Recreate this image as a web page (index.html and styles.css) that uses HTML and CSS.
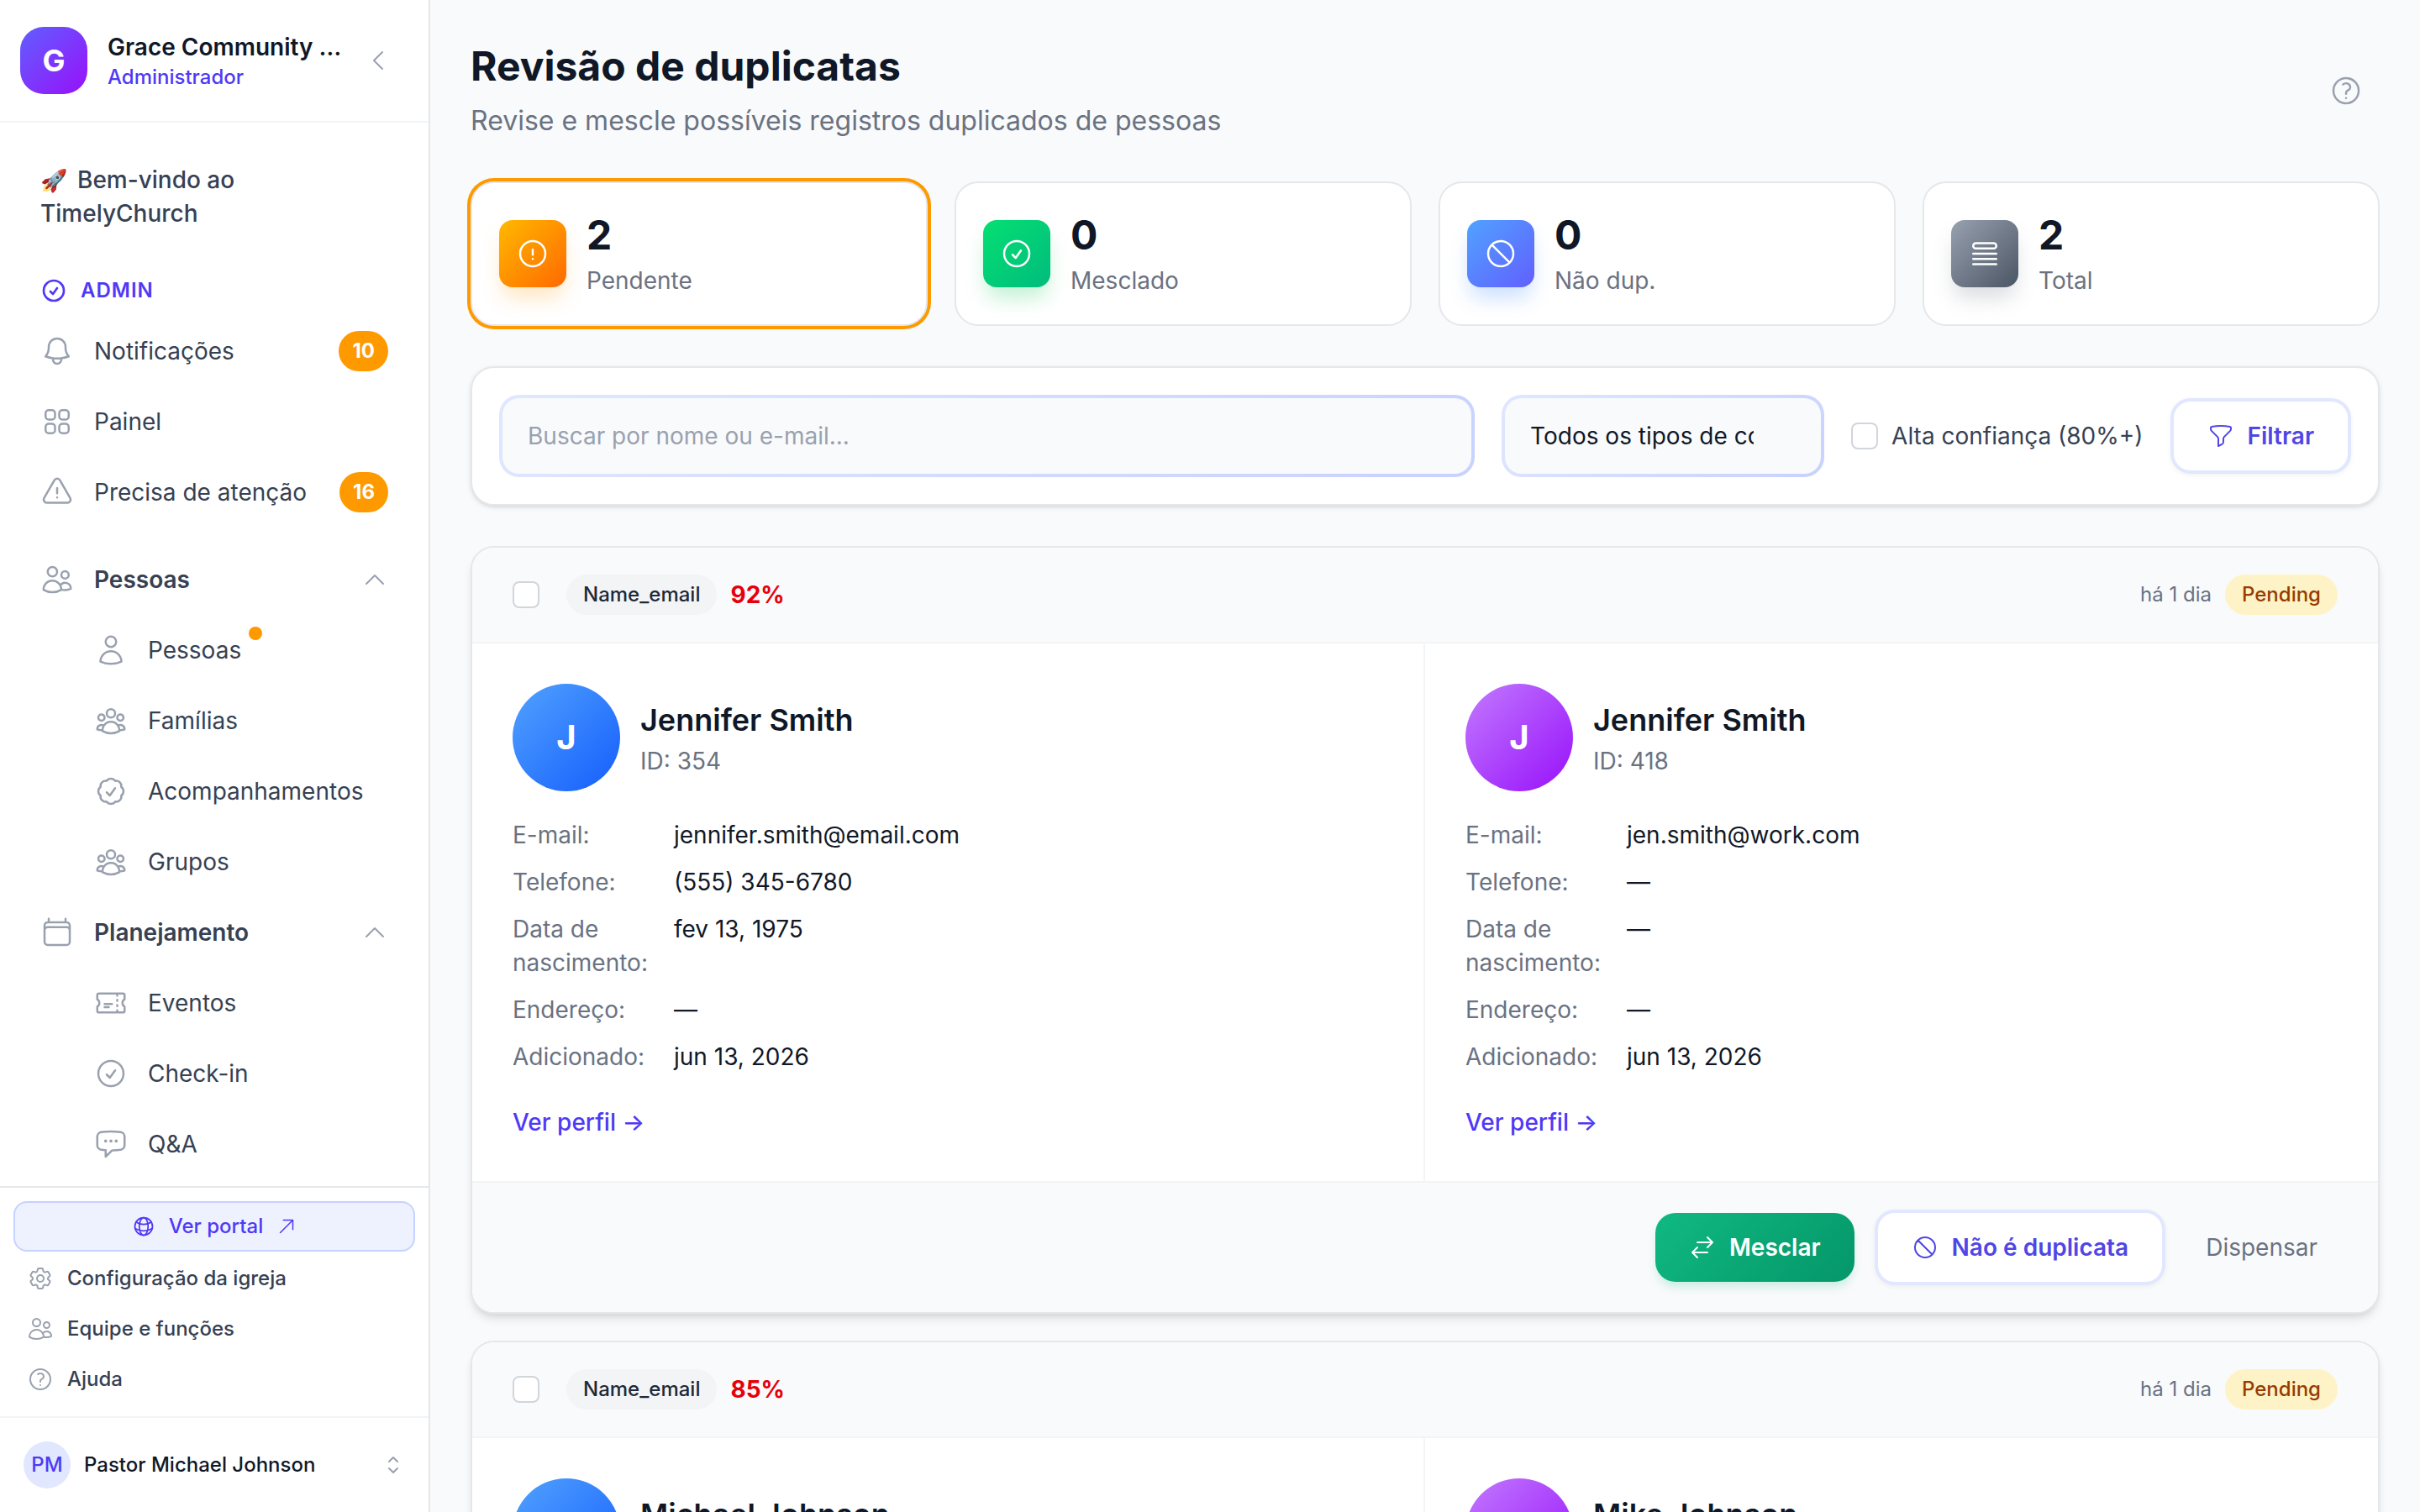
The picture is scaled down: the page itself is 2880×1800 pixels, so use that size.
FILE: index.html
```html
<!DOCTYPE html>
<html lang="pt-BR">
<head>
<meta charset="UTF-8" />
<meta name="viewport" content="width=device-width, initial-scale=1" />
<title>Revisão de duplicatas</title>
<link rel="stylesheet" href="styles.css">
</head>
<body>

<!-- Icon sprite -->
<svg class="sprite" aria-hidden="true">
  <symbol id="i-chevron-left" viewBox="0 0 24 24"><path d="M15.75 19.5 8.25 12l7.5-7.5"/></symbol>
  <symbol id="i-chevron-up" viewBox="0 0 24 24"><path d="m4.5 15.75 7.5-7.5 7.5 7.5"/></symbol>
  <symbol id="i-chevron-up-down" viewBox="0 0 24 24"><path d="M8.25 15 12 18.75 15.75 15m-7.5-6L12 5.25 15.75 9"/></symbol>
  <symbol id="i-check-circle" viewBox="0 0 24 24"><path d="M9 12.75 11.25 15 15 9.75M21 12a9 9 0 1 1-18 0 9 9 0 0 1 18 0Z"/></symbol>
  <symbol id="i-bell" viewBox="0 0 24 24"><path d="M14.857 17.082a23.848 23.848 0 0 0 5.454-1.31A8.967 8.967 0 0 1 18 9.75V9A6 6 0 0 0 6 9v.75a8.967 8.967 0 0 1-2.312 6.022c1.733.64 3.56 1.085 5.455 1.31m5.714 0a24.255 24.255 0 0 1-5.714 0m5.714 0a3 3 0 1 1-5.714 0"/></symbol>
  <symbol id="i-grid" viewBox="0 0 24 24"><path d="M3.75 6A2.25 2.25 0 0 1 6 3.75h2.25A2.25 2.25 0 0 1 10.5 6v2.25a2.25 2.25 0 0 1-2.25 2.25H6a2.25 2.25 0 0 1-2.25-2.25V6ZM3.75 15.75A2.25 2.25 0 0 1 6 13.5h2.25a2.25 2.25 0 0 1 2.25 2.25V18a2.25 2.25 0 0 1-2.25 2.25H6A2.25 2.25 0 0 1 3.75 18v-2.25ZM13.5 6a2.25 2.25 0 0 1 2.25-2.25H18A2.25 2.25 0 0 1 20.25 6v2.25A2.25 2.25 0 0 1 18 10.5h-2.25a2.25 2.25 0 0 1-2.25-2.25V6ZM13.5 15.75a2.25 2.25 0 0 1 2.25-2.25H18a2.25 2.25 0 0 1 2.25 2.25V18A2.25 2.25 0 0 1 18 20.25h-2.25A2.25 2.25 0 0 1 13.5 18v-2.25Z"/></symbol>
  <symbol id="i-warning" viewBox="0 0 24 24"><path d="M12 9v3.75m-9.303 3.376c-.866 1.5.217 3.374 1.948 3.374h14.71c1.73 0 2.813-1.874 1.948-3.374L13.949 3.378c-.866-1.5-3.032-1.5-3.898 0L2.697 16.126ZM12 15.75h.007v.008H12v-.008Z"/></symbol>
  <symbol id="i-users" viewBox="0 0 24 24"><path d="M15 19.128a9.38 9.38 0 0 0 2.625.372 9.337 9.337 0 0 0 4.121-.952 4.125 4.125 0 0 0-7.533-2.493M15 19.128v-.003c0-1.113-.285-2.16-.786-3.07M15 19.128v.106A12.318 12.318 0 0 1 8.624 21c-2.331 0-4.512-.645-6.374-1.766l-.001-.109a6.375 6.375 0 0 1 11.964-3.07M12 6.375a3.375 3.375 0 1 1-6.75 0 3.375 3.375 0 0 1 6.75 0Zm8.25 2.25a2.625 2.625 0 1 1-5.25 0 2.625 2.625 0 0 1 5.25 0Z"/></symbol>
  <symbol id="i-user" viewBox="0 0 24 24"><path d="M15.75 6a3.75 3.75 0 1 1-7.5 0 3.75 3.75 0 0 1 7.5 0ZM4.501 20.118a7.5 7.5 0 0 1 14.998 0A17.933 17.933 0 0 1 12 21.75c-2.676 0-5.216-.584-7.499-1.632Z"/></symbol>
  <symbol id="i-user-group" viewBox="0 0 24 24"><path d="M18 18.72a9.094 9.094 0 0 0 3.741-.479 3 3 0 0 0-4.682-2.72m.94 3.198.001.031c0 .225-.012.447-.037.666A11.944 11.944 0 0 1 12 21c-2.17 0-4.207-.576-5.963-1.584A6.062 6.062 0 0 1 6 18.719m12 0a5.971 5.971 0 0 0-.941-3.197m0 0A5.995 5.995 0 0 0 12 12.75a5.995 5.995 0 0 0-5.058 2.772m0 0a3 3 0 0 0-4.681 2.72 8.986 8.986 0 0 0 3.74.477m.94-3.197a5.971 5.971 0 0 0-.94 3.197M15 6.75a3 3 0 1 1-6 0 3 3 0 0 1 6 0Zm6 3a2.25 2.25 0 1 1-4.5 0 2.25 2.25 0 0 1 4.5 0Zm-13.5 0a2.25 2.25 0 1 1-4.5 0 2.25 2.25 0 0 1 4.5 0Z"/></symbol>
  <symbol id="i-check-badge" viewBox="0 0 24 24"><path d="M9 12.75 11.25 15 15 9.75M21 12c0 1.268-.63 2.39-1.593 3.068a3.745 3.745 0 0 1-1.043 3.296 3.745 3.745 0 0 1-3.296 1.043A3.745 3.745 0 0 1 12 21c-1.268 0-2.39-.63-3.068-1.593a3.746 3.746 0 0 1-3.296-1.043 3.745 3.745 0 0 1-1.043-3.296A3.745 3.745 0 0 1 3 12c0-1.268.63-2.39 1.593-3.068a3.745 3.745 0 0 1 1.043-3.296 3.746 3.746 0 0 1 3.296-1.043A3.746 3.746 0 0 1 12 3c1.268 0 2.39.63 3.068 1.593a3.746 3.746 0 0 1 3.296 1.043 3.746 3.746 0 0 1 1.043 3.296A3.745 3.745 0 0 1 21 12Z"/></symbol>
  <symbol id="i-calendar" viewBox="0 0 24 24"><path d="M6 2.25V4.5m12-2.25V4.5M3 18.75V7a2.25 2.25 0 0 1 2.25-2.25h13.5A2.25 2.25 0 0 1 21 7v11.75A2.25 2.25 0 0 1 18.75 21H5.25A2.25 2.25 0 0 1 3 18.75ZM3 10.5a2.25 2.25 0 0 1 2.25-2.25h13.5A2.25 2.25 0 0 1 21 10.5"/></symbol>
  <symbol id="i-ticket" viewBox="0 0 24 24"><path d="M16.5 6v.75m0 3v.75m0 3v.75m0 3V18m-9-5.25h5.25M7.5 15h3M3.375 5.25c-.621 0-1.125.504-1.125 1.125v3.026a2.999 2.999 0 0 1 0 5.198v3.026c0 .621.504 1.125 1.125 1.125h17.25c.621 0 1.125-.504 1.125-1.125v-3.026a2.999 2.999 0 0 1 0-5.198V6.375c0-.621-.504-1.125-1.125-1.125H3.375Z"/></symbol>
  <symbol id="i-chat" viewBox="0 0 24 24"><path d="M8.625 9.75a.375.375 0 1 1-.75 0 .375.375 0 0 1 .75 0Zm0 0H8.25m4.125 0a.375.375 0 1 1-.75 0 .375.375 0 0 1 .75 0Zm0 0H12m4.125 0a.375.375 0 1 1-.75 0 .375.375 0 0 1 .75 0Zm0 0h-.375m-13.5 3.01c0 1.6 1.123 2.994 2.707 3.227 1.087.16 2.185.283 3.293.369V21l4.184-4.183a1.14 1.14 0 0 1 .778-.332 48.294 48.294 0 0 0 5.83-.498c1.585-.233 2.708-1.626 2.708-3.228V6.741c0-1.602-1.123-2.995-2.707-3.228A48.394 48.394 0 0 0 12 3c-2.392 0-4.744.175-7.043.513C3.373 3.746 2.25 5.14 2.25 6.741v6.018Z"/></symbol>
  <symbol id="i-globe" viewBox="0 0 24 24"><circle cx="12" cy="12" r="9"/><ellipse cx="12" cy="12" rx="4.5" ry="9"/><path d="M4.3 7.4c2 1.6 4.7 2.6 7.7 2.6s5.7-1 7.7-2.6M3.2 14.2c2.6 1.5 5.6 2.3 8.8 2.3s6.2-.8 8.8-2.3"/></symbol>
  <symbol id="i-arrow-up-right" viewBox="0 0 24 24"><path d="m4.5 19.5 15-15m0 0H8.25m11.25 0v11.25"/></symbol>
  <symbol id="i-cog" viewBox="0 0 24 24"><path d="M9.594 3.94c.09-.542.56-.94 1.11-.94h2.593c.55 0 1.02.398 1.11.94l.213 1.281c.063.374.313.686.645.87.074.04.147.083.22.127.325.196.72.257 1.075.124l1.217-.456a1.125 1.125 0 0 1 1.37.49l1.296 2.247a1.125 1.125 0 0 1-.26 1.431l-1.003.827c-.293.241-.438.613-.43.992a7.723 7.723 0 0 1 0 .255c-.008.378.137.75.43.991l1.004.827c.424.35.534.955.26 1.43l-1.298 2.247a1.125 1.125 0 0 1-1.369.491l-1.217-.456c-.355-.133-.75-.072-1.076.124a6.47 6.47 0 0 1-.22.128c-.331.183-.581.495-.644.869l-.213 1.281c-.09.543-.56.94-1.11.94h-2.594c-.55 0-1.019-.398-1.11-.94l-.213-1.281c-.062-.374-.312-.686-.644-.87a6.52 6.52 0 0 1-.22-.127c-.325-.196-.72-.257-1.076-.124l-1.217.456a1.125 1.125 0 0 1-1.369-.49l-1.297-2.247a1.125 1.125 0 0 1 .26-1.431l1.004-.827c.292-.24.437-.613.43-.991a6.932 6.932 0 0 1 0-.255c.007-.38-.138-.751-.43-.992l-1.004-.827a1.125 1.125 0 0 1-.26-1.43l1.297-2.247a1.125 1.125 0 0 1 1.37-.491l1.216.456c.356.133.751.072 1.076-.124.072-.044.146-.086.22-.128.332-.183.582-.495.644-.869l.214-1.28ZM15 12a3 3 0 1 1-6 0 3 3 0 0 1 6 0Z"/></symbol>
  <symbol id="i-question" viewBox="0 0 24 24"><path d="M9.879 7.519c1.171-1.025 3.071-1.025 4.242 0 1.172 1.025 1.172 2.687 0 3.712-.203.179-.43.326-.67.442-.745.361-1.45.999-1.45 1.827v.75M21 12a9 9 0 1 1-18 0 9 9 0 0 1 18 0Zm-9 5.25h.008v.008H12v-.008Z"/></symbol>
  <symbol id="i-exclamation" viewBox="0 0 24 24"><path d="M12 9v3.75m9-.75a9 9 0 1 1-18 0 9 9 0 0 1 18 0Zm-9 3.75h.008v.008H12v-.008Z"/></symbol>
  <symbol id="i-no-symbol" viewBox="0 0 24 24"><path d="M18.364 18.364A9 9 0 0 0 5.636 5.636m12.728 12.728A9 9 0 0 1 5.636 5.636m12.728 12.728L5.636 5.636"/></symbol>
  <symbol id="i-queue" viewBox="0 0 24 24"><path d="M3.75 12h16.5m-16.5 3.75h16.5M3.75 19.5h16.5M5.625 4.5h12.75a1.875 1.875 0 0 1 0 3.75H5.625a1.875 1.875 0 0 1 0-3.75Z"/></symbol>
  <symbol id="i-funnel" viewBox="0 0 24 24"><path d="M12 3c2.755 0 5.455.232 8.083.678.533.09.917.556.917 1.096v1.044a2.25 2.25 0 0 1-.659 1.591l-5.432 5.432a2.25 2.25 0 0 0-.659 1.591v2.927a2.25 2.25 0 0 1-1.244 2.013L9.75 21v-6.568a2.25 2.25 0 0 0-.659-1.591L3.659 7.409A2.25 2.25 0 0 1 3 5.818V4.774c0-.54.384-1.006.917-1.096A48.32 48.32 0 0 1 12 3Z"/></symbol>
  <symbol id="i-swap" viewBox="0 0 24 24"><path d="M7.5 21 3 16.5m0 0L7.5 12M3 16.5h13.5m0-13.5L21 7.5m0 0L16.5 12M21 7.5H7.5"/></symbol>
</svg>

<div class="app">
  <aside class="sidebar">
    <header class="brand">
      <div class="brand-logo">G</div>
      <div class="brand-text">
        <div class="brand-name">Grace Community Church</div>
        <div class="brand-role">Administrador</div>
      </div>
      <button class="icon-btn" aria-label="Recolher menu"><svg class="icon icon-sm"><use href="#i-chevron-left"/></svg></button>
    </header>

    <nav class="nav">
      <a href="#" class="welcome"><span class="rocket">🚀</span>Bem-vindo ao TimelyChurch</a>

      <div class="nav-label"><svg class="icon icon-sm bold"><use href="#i-check-circle"/></svg>ADMIN</div>
      <div class="nav-list">
        <a href="#" class="nav-item"><svg class="icon"><use href="#i-bell"/></svg>Notificações<span class="count">10</span></a>
        <a href="#" class="nav-item"><svg class="icon"><use href="#i-grid"/></svg>Painel</a>
        <a href="#" class="nav-item"><svg class="icon"><use href="#i-warning"/></svg>Precisa de atenção<span class="count">16</span></a>
      </div>

      <div class="nav-list nav-groups">
        <button class="nav-item group"><svg class="icon"><use href="#i-users"/></svg>Pessoas<svg class="icon icon-sm caret"><use href="#i-chevron-up"/></svg></button>
        <a href="#" class="nav-item sub"><svg class="icon"><use href="#i-user"/></svg><span class="with-dot">Pessoas</span></a>
        <a href="#" class="nav-item sub"><svg class="icon"><use href="#i-user-group"/></svg>Famílias</a>
        <a href="#" class="nav-item sub"><svg class="icon"><use href="#i-check-badge"/></svg>Acompanhamentos</a>
        <a href="#" class="nav-item sub"><svg class="icon"><use href="#i-user-group"/></svg>Grupos</a>
        <button class="nav-item group"><svg class="icon"><use href="#i-calendar"/></svg>Planejamento<svg class="icon icon-sm caret"><use href="#i-chevron-up"/></svg></button>
        <a href="#" class="nav-item sub"><svg class="icon"><use href="#i-ticket"/></svg>Eventos</a>
        <a href="#" class="nav-item sub"><svg class="icon"><use href="#i-check-circle"/></svg>Check-in</a>
        <a href="#" class="nav-item sub"><svg class="icon"><use href="#i-chat"/></svg>Q&amp;A</a>
      </div>
    </nav>

    <div class="side-links">
      <a href="#" class="portal"><svg class="icon icon-xs"><use href="#i-globe"/></svg>Ver portal<svg class="icon icon-arrow"><use href="#i-arrow-up-right"/></svg></a>
      <a href="#" class="side-link"><svg class="icon icon-sm"><use href="#i-cog"/></svg>Configuração da igreja</a>
      <a href="#" class="side-link"><svg class="icon icon-sm"><use href="#i-users"/></svg>Equipe e funções</a>
      <a href="#" class="side-link"><svg class="icon icon-sm"><use href="#i-question"/></svg>Ajuda</a>
    </div>

    <button class="profile">
      <span class="profile-avatar">PM</span>
      Pastor Michael Johnson
      <svg class="icon icon-sm caret"><use href="#i-chevron-up-down"/></svg>
    </button>
  </aside>

  <main class="main">
    <header class="page-header">
      <div>
        <h1>Revisão de duplicatas</h1>
        <p class="subtitle">Revise e mescle possíveis registros duplicados de pessoas</p>
      </div>
      <button class="icon-btn help" aria-label="Ajuda"><svg class="icon"><use href="#i-question"/></svg></button>
    </header>

    <section class="stats">
      <a href="#" class="stat active">
        <span class="stat-icon amber"><svg class="icon"><use href="#i-exclamation"/></svg></span>
        <span class="stat-text"><strong>2</strong>Pendente</span>
      </a>
      <a href="#" class="stat">
        <span class="stat-icon green"><svg class="icon"><use href="#i-check-circle"/></svg></span>
        <span class="stat-text"><strong>0</strong>Mesclado</span>
      </a>
      <a href="#" class="stat">
        <span class="stat-icon blue"><svg class="icon"><use href="#i-no-symbol"/></svg></span>
        <span class="stat-text"><strong>0</strong>Não dup.</span>
      </a>
      <a href="#" class="stat">
        <span class="stat-icon gray"><svg class="icon"><use href="#i-queue"/></svg></span>
        <span class="stat-text"><strong>2</strong>Total</span>
      </a>
    </section>

    <form class="card filters">
      <input type="text" class="field search" placeholder="Buscar por nome ou e-mail..." aria-label="Buscar por nome ou e-mail">
      <select class="field type-select" aria-label="Tipo de correspondência">
        <option>Todos os tipos de correspondência</option>
      </select>
      <label class="check-label" for="highConfidence"><input type="checkbox" class="check" id="highConfidence">Alta confiança (80%+)</label>
      <button type="button" class="btn btn-outline"><svg class="icon icon-sm"><use href="#i-funnel"/></svg>Filtrar</button>
    </form>

    <section class="matches">
      <article class="card match">
        <header class="match-head">
          <input type="checkbox" class="check" aria-label="Selecionar Jennifer Smith">
          <span class="tag">Name_email</span>
          <span class="score">92%</span>
          <span class="when">há 1 dia</span>
          <span class="tag tag-pending">Pending</span>
        </header>
        <div class="compare">
          <div class="person">
            <div class="person-head">
              <div class="avatar avatar-blue">J</div>
              <div>
                <h2>Jennifer Smith</h2>
                <p class="person-id">ID: 354</p>
              </div>
            </div>
            <dl class="details">
              <dt>E-mail:</dt><dd>jennifer.smith@email.com</dd>
              <dt>Telefone:</dt><dd>(555) 345-6780</dd>
              <dt>Data de nascimento:</dt><dd>fev 13, 1975</dd>
              <dt>Endereço:</dt><dd>—</dd>
              <dt>Adicionado:</dt><dd>jun 13, 2026</dd>
            </dl>
            <a href="#" class="profile-link">Ver perfil →</a>
          </div>
          <div class="person">
            <div class="person-head">
              <div class="avatar avatar-purple">J</div>
              <div>
                <h2>Jennifer Smith</h2>
                <p class="person-id">ID: 418</p>
              </div>
            </div>
            <dl class="details">
              <dt>E-mail:</dt><dd>jen.smith@work.com</dd>
              <dt>Telefone:</dt><dd>—</dd>
              <dt>Data de nascimento:</dt><dd>—</dd>
              <dt>Endereço:</dt><dd>—</dd>
              <dt>Adicionado:</dt><dd>jun 13, 2026</dd>
            </dl>
            <a href="#" class="profile-link">Ver perfil →</a>
          </div>
        </div>
        <footer class="match-actions">
          <button class="btn btn-merge"><svg class="icon icon-sm"><use href="#i-swap"/></svg>Mesclar</button>
          <button class="btn btn-outline"><svg class="icon icon-sm"><use href="#i-no-symbol"/></svg>Não é duplicata</button>
          <button class="btn btn-ghost">Dispensar</button>
        </footer>
      </article>

      <article class="card match">
        <header class="match-head">
          <input type="checkbox" class="check" aria-label="Selecionar Michael Johnson">
          <span class="tag">Name_email</span>
          <span class="score">85%</span>
          <span class="when">há 1 dia</span>
          <span class="tag tag-pending">Pending</span>
        </header>
        <div class="compare">
          <div class="person">
            <div class="person-head">
              <div class="avatar avatar-blue">M</div>
              <div>
                <h2>Michael Johnson</h2>
                <p class="person-id">ID:</p>
              </div>
            </div>
          </div>
          <div class="person">
            <div class="person-head">
              <div class="avatar avatar-purple">M</div>
              <div>
                <h2>Mike Johnson</h2>
                <p class="person-id">ID:</p>
              </div>
            </div>
          </div>
        </div>
      </article>
    </section>
  </main>
</div>

</body>
</html>
```

FILE: styles.css
```css
* {
  box-sizing: border-box;
}
body {
  font-family: Inter, "Liberation Sans", sans-serif;
  font-size: 28px;
  line-height: 40px;
  color: #101828;
  background: #f9fafb;
  margin: 0;
}
h1, h2, p, dl, dd {
  margin: 0;
}
a {
  color: inherit;
  text-decoration: none;
}
button {
  font: inherit;
  color: inherit;
  background: none;
  border: none;
  padding: 0;
  cursor: pointer;
}
.sprite {
  display: none;
}
.icon {
  width: 40px;
  height: 40px;
  flex-shrink: 0;
  fill: none;
  stroke: currentColor;
  stroke-width: 1.5;
  stroke-linecap: round;
  stroke-linejoin: round;
}
.icon-sm {
  width: 32px;
  height: 32px;
}
.icon-xs {
  width: 28px;
  height: 28px;
}
.icon-arrow {
  width: 24px;
  height: 24px;
}
.bold {
  stroke-width: 2;
}
.icon-btn {
  display: flex;
  color: #99a1af;
}

.app {
  display: flex;
  height: 100vh;
  overflow: hidden;
}

/* Sidebar */
.sidebar {
  width: 512px;
  flex-shrink: 0;
  display: flex;
  flex-direction: column;
  background: white;
  border-right: 2px solid #e5e7eb;
}
.brand {
  display: flex;
  align-items: center;
  gap: 24px;
  padding: 32px 44px 32px 24px;
  border-bottom: 2px solid #f3f4f6;
}
.brand-logo {
  width: 80px;
  height: 80px;
  flex-shrink: 0;
  display: flex;
  align-items: center;
  justify-content: center;
  border-radius: 28px;
  background: linear-gradient(135deg, #615fff, #9810fa);
  color: white;
  font-size: 36px;
  font-weight: 700;
}
.brand-text {
  flex: 1;
  min-width: 0;
}
.brand-name {
  font-weight: 600;
  white-space: nowrap;
  overflow: hidden;
  text-overflow: ellipsis;
}
.brand-role {
  font-size: 24px;
  line-height: 32px;
  font-weight: 500;
  color: #4f39f6;
}
.nav {
  flex: 1;
  min-height: 0;
  overflow: hidden;
  padding: 32px 24px;
  color: #364153;
}
.welcome {
  display: block;
  padding: 16px 24px;
  font-weight: 500;
}
.rocket {
  margin-right: 12px;
  font-size: 26px;
  line-height: 32px;
}
.nav-label {
  display: flex;
  align-items: center;
  gap: 16px;
  margin: 40px 24px 16px;
  font-size: 24px;
  line-height: 32px;
  font-weight: 600;
  letter-spacing: 1px;
  color: #4f39f6;
}
.nav-list {
  display: flex;
  flex-direction: column;
  gap: 4px;
}
.nav-groups {
  margin-top: 24px;
}
.nav-item {
  display: flex;
  align-items: center;
  gap: 24px;
  height: 80px;
  flex-shrink: 0;
  padding: 0 24px;
}
.nav-item .icon {
  color: #99a1af;
}
.group {
  font-weight: 600;
}
.sub {
  padding-left: 88px;
}
.count {
  margin-left: auto;
  padding: 8px 16px;
  border-radius: 24px;
  background: #fe9a00;
  color: white;
  font-size: 24px;
  line-height: 32px;
  font-weight: 700;
}
.caret {
  margin-left: auto;
}
.with-dot {
  position: relative;
}
.with-dot::after {
  content: "";
  position: absolute;
  top: -8px;
  right: -25px;
  width: 16px;
  height: 16px;
  border-radius: 50%;
  background: #fe9a00;
}
.side-links {
  padding: 16px 16px 14px;
  border-top: 2px solid #e5e7eb;
  font-size: 24px;
  line-height: 32px;
  font-weight: 500;
  color: #364153;
}
.portal {
  display: flex;
  align-items: center;
  justify-content: center;
  gap: 16px;
  height: 60px;
  margin-bottom: 2px;
  border: 2px solid #c6d2ff;
  border-radius: 16px;
  background: #eef2ff;
  color: #4f39f6;
}
.side-link {
  display: flex;
  align-items: center;
  gap: 16px;
  padding: 14px 16px;
}
.side-link .icon {
  color: #99a1af;
}
.profile {
  display: flex;
  align-items: center;
  gap: 16px;
  padding: 28px 26px 28px 28px;
  border-top: 2px solid #f3f4f6;
  font-size: 24px;
  line-height: 32px;
  font-weight: 500;
}
.profile-avatar {
  width: 56px;
  height: 56px;
  display: flex;
  align-items: center;
  justify-content: center;
  border-radius: 50%;
  background: #e0e7ff;
  color: #4f39f6;
}
.profile .icon {
  color: #99a1af;
}

/* Page */
.main {
  flex: 1;
  min-width: 0;
  overflow: hidden;
  padding: 48px;
}
.page-header {
  display: flex;
  align-items: center;
  justify-content: space-between;
  margin-bottom: 48px;
}
h1 {
  font-size: 48px;
  line-height: 62px;
  font-weight: 700;
}
.subtitle {
  margin-top: 10px;
  font-size: 32px;
  line-height: 48px;
  color: #6a7282;
}
.help {
  padding: 20px;
}
.stats {
  display: grid;
  grid-template-columns: repeat(4, 1fr);
  gap: 32px;
  margin-bottom: 48px;
}
.stat {
  display: flex;
  align-items: center;
  gap: 24px;
  padding: 32px;
  border: 2px solid #e5e7eb;
  border-radius: 28px;
  background: white;
}
.stat.active {
  box-shadow: 0 0 0 4px #fe9a00;
}
.stat-icon {
  width: 80px;
  height: 80px;
  display: flex;
  align-items: center;
  justify-content: center;
  border-radius: 16px;
  color: white;
}
.amber {
  background: linear-gradient(135deg, #ffb900, #ff6900);
  box-shadow: 0 16px 24px -4px #fe9a0040;
}
.green {
  background: linear-gradient(135deg, #05df72, #00bc7d);
  box-shadow: 0 16px 24px -4px #00c95040;
}
.blue {
  background: linear-gradient(135deg, #51a2ff, #615fff);
  box-shadow: 0 16px 24px -4px #2b7fff40;
}
.gray {
  background: linear-gradient(135deg, #99a1af, #4a5565);
  box-shadow: 0 16px 24px -4px #6a728240;
}
.stat-text {
  color: #6a7282;
}
.stat-text strong {
  display: block;
  margin-bottom: 4px;
  font-size: 48px;
  line-height: 60px;
  font-weight: 700;
  color: #101828;
}
.card {
  border: 2px solid #e5e7eb;
  border-radius: 28px;
  background: white;
  box-shadow: 0 2px 6px #0000001a, 0 2px 4px -2px #0000001a;
}
.filters {
  display: flex;
  align-items: center;
  gap: 32px;
  padding: 32px;
  margin-bottom: 48px;
}
.field {
  height: 98px;
  padding: 0 30px;
  border: 4px solid transparent;
  border-radius: 24px;
  background: linear-gradient(#f9fafb, #f9fafb) padding-box, linear-gradient(135deg, #e0e7ff, #c7d2fe) border-box;
  font: inherit;
  color: #101828;
}
.field::placeholder {
  color: #99a1af;
  opacity: 1;
}
.search {
  flex: 1;
  min-width: 0;
}
.type-select {
  appearance: none;
  width: 384px;
  padding-right: 80px;
  text-overflow: clip;
}
.check {
  appearance: none;
  width: 32px;
  height: 32px;
  flex-shrink: 0;
  margin: 0;
  border: 2px solid #d1d5dc;
  border-radius: 8px;
  background: white;
}
.check:checked {
  background: #4f39f6;
}
.check-label {
  display: flex;
  align-items: center;
  gap: 16px;
  color: #364153;
}
.btn {
  display: flex;
  align-items: center;
  gap: 16px;
  padding: 20px 40px;
  border-radius: 24px;
  line-height: 42px;
  font-weight: 600;
}
.btn-outline {
  border: 4px solid #e0e7ff;
  background: white;
  color: #4f46e5;
  box-shadow: 0 2px 6px #0000000d;
}
.btn-merge {
  background: linear-gradient(135deg, #10b981, #059669);
  color: white;
  box-shadow: 0 8px 12px -2px #10b98133;
}
.btn-ghost {
  padding: 20px 24px;
  font-weight: 400;
  color: #6a7282;
}

/* Duplicate pairs */
.matches {
  display: flex;
  flex-direction: column;
  gap: 32px;
}
.match {
  overflow: hidden;
  box-shadow: 0 8px 12px -2px #0000001a, 0 4px 8px -4px #0000001a;
}
.match-head {
  display: flex;
  align-items: center;
  gap: 16px;
  padding: 32px 48px;
  border-bottom: 2px solid #f3f4f6;
  background: #f9fafb;
}
.match-head .check {
  margin-right: 16px;
}
.tag {
  padding: 8px 20px;
  border-radius: 24px;
  background: #f3f4f6;
  color: #1e2939;
  font-size: 24px;
  line-height: 32px;
  font-weight: 500;
}
.tag-pending {
  background: #fef3c6;
  color: #973c00;
}
.score {
  font-weight: 700;
  color: #e7000b;
}
.when {
  margin-left: auto;
  font-size: 24px;
  color: #6a7282;
}
.compare {
  display: grid;
  grid-template-columns: 1fr 1fr;
}
.person {
  padding: 48px;
}
.person:first-child {
  border-right: 2px solid #f3f4f6;
}
.person-head {
  display: flex;
  align-items: center;
  gap: 24px;
  margin-bottom: 32px;
}
.avatar {
  width: 128px;
  height: 128px;
  display: flex;
  align-items: center;
  justify-content: center;
  border-radius: 50%;
  color: white;
  font-size: 40px;
  font-weight: 700;
}
.avatar-blue {
  background: linear-gradient(135deg, #51a2ff, #155dfc);
}
.avatar-purple {
  background: linear-gradient(135deg, #c27aff, #9810fa);
}
h2 {
  margin-bottom: 2px;
  font-size: 36px;
  line-height: 54px;
  font-weight: 600;
}
.person-id {
  color: #6a7282;
}
.details {
  display: grid;
  grid-template-columns: 176px 1fr;
  gap: 16px;
  margin-bottom: 38px;
}
.details dt {
  color: #6a7282;
}
.profile-link {
  display: block;
  margin-bottom: 2px;
  font-weight: 500;
  color: #4f39f6;
}
.match-actions {
  display: flex;
  align-items: center;
  justify-content: flex-end;
  gap: 24px;
  padding: 32px 48px;
  border-top: 2px solid #f3f4f6;
  background: #f9fafb;
}
```
